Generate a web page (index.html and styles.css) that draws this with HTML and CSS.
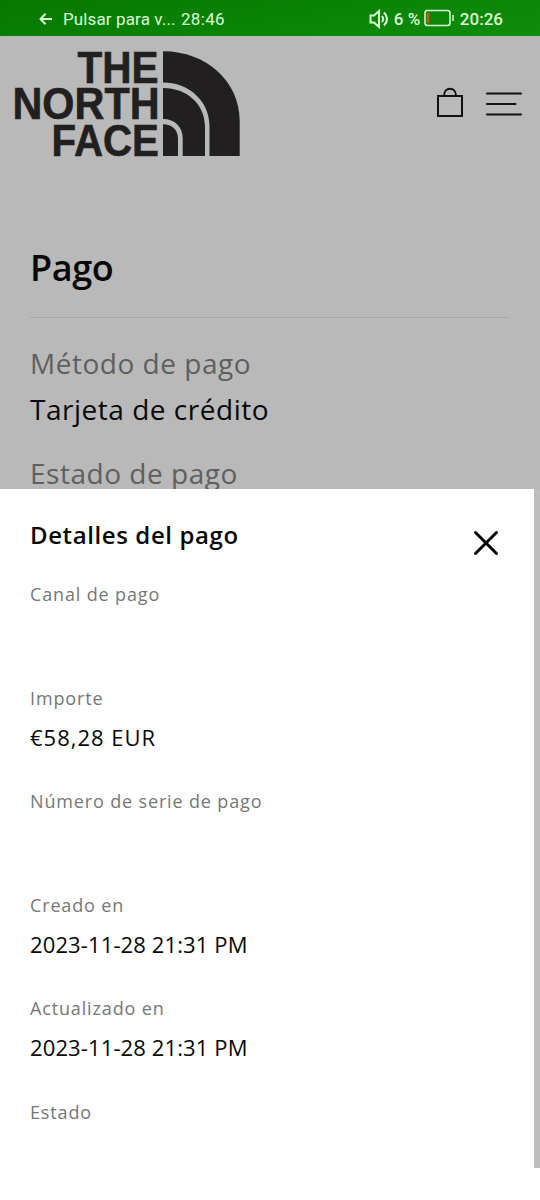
FILE: index.html
```html
<!DOCTYPE html>
<html lang="es">
<head>
<meta charset="utf-8">
<title>Detalles del pago</title>
<link rel="stylesheet" href="styles.css">
</head>
<body>
<div class="status">
  <div class="call">
    <svg class="back" width="14" height="14" viewBox="0 0 14 14"><path d="M13 7H2M6.500 1.800 1.500 7l5 5.200"/></svg>
    <span class="call-text">Pulsar para v...</span><span class="call-time">28:46</span>
  </div>
  <div class="system">
    <svg class="sound" width="20" height="20" viewBox="0 0 20 20"><path d="M1.500 6.500H5L10 2v16L5 13.500H1.500zM13 7q2.300 3 0 6M15 3.500q6 6.500 0 13"/></svg>
    <span class="percent">6 %</span>
    <svg class="battery" width="31" height="18" viewBox="0 0 31 18"><rect x="1" y="1.500" width="25" height="15" rx="2.500"/><path d="M29 6v6"/><path class="charge" d="M4 4v10"/></svg>
    <span class="clock">20:26</span>
  </div>
</div>
<header class="header">
  <svg class="logo" width="240" height="121" viewBox="0 36 240 121">
    <g class="brand">
      <text x="77.500" y="82.500" textLength="81" lengthAdjust="spacingAndGlyphs">THE</text>
      <text x="12.500" y="118.800" textLength="147" lengthAdjust="spacingAndGlyphs">NORTH</text>
      <text x="51.500" y="155.600" textLength="107.500" lengthAdjust="spacingAndGlyphs">FACE</text>
    </g>
    <path d="M163 51.300C207 51.300 239.700 82 239.700 121V156H209.500V126C209.500 101 189 82.500 163 82.500Z"/>
    <path d="M163 88C187 88 205 104 205 127V156H182.700V138C182.700 127 175 119 163 119Z"/>
    <path d="M163 124.300C172 124.300 178 130 178 139V156H163Z"/>
  </svg>
  <div class="actions">
    <svg class="line-icon bag" width="28" height="32" viewBox="0 0 28 32"><path d="M2 10h24v20H2zM8 10C8 .3 20 .3 20 10"/></svg>
    <svg class="line-icon round" width="36" height="26" viewBox="0 0 36 26"><path d="M1 2.500h34M1 13h28.500M1 23.500h34"/></svg>
  </div>
</header>
<main class="page">
  <h1 class="title">Pago</h1>
  <div class="info label">Método de pago</div>
  <div class="info">Tarjeta de crédito</div>
  <div class="info label last">Estado de pago</div>
</main>
<section class="sheet">
  <div class="sheet-head">
    <h2 class="sheet-title">Detalles del pago</h2>
    <svg class="close" width="26" height="26" viewBox="0 0 26 26"><path d="M2.500 2.500l21 21M23.500 2.500l-21 21"/></svg>
  </div>
  <dl class="fields">
    <div class="field"><dt>Canal de pago</dt><dd></dd></div>
    <div class="field"><dt>Importe</dt><dd class="amount">€58,28 EUR</dd></div>
    <div class="field"><dt>Número de serie de pago</dt><dd></dd></div>
    <div class="field"><dt>Creado en</dt><dd>2023-11-28 21:31 PM</dd></div>
    <div class="field"><dt>Actualizado en</dt><dd>2023-11-28 21:31 PM</dd></div>
    <div class="field"><dt>Estado</dt><dd></dd></div>
  </dl>
</section>
</body>
</html>
```
FILE: styles.css
```css
* { box-sizing: border-box; }
body { margin: 0; width: 540px; height: 1200px; overflow: hidden; background: #fff; color: #080808; font-family: "Open Sans", "Noto Sans", sans-serif; }
h1, h2, dl, dd { margin: 0; }
svg { display: block; flex: none; }
.status { height: 36px; display: flex; justify-content: space-between; align-items: center; padding: 1px 37px 0 39px; background: linear-gradient(170deg, #087700, #0a8505 60%, #118b0b); color: #d9ffd2; font: 17px/24px Roboto, sans-serif; white-space: nowrap; }
.status svg { fill: none; stroke: #d9ffd2; stroke-width: 2; }
.call, .system { display: flex; align-items: center; }
.call-text { margin-left: 10px; width: 118px; letter-spacing: .12px; }
.call-time { letter-spacing: .3px; }
.system { font-weight: 500; }
.percent { margin-left: 5px; width: 30px; }
.status .battery { stroke-width: 1.5; margin-top: -1px; }
.status .charge { stroke: #c65b13; stroke-width: 2.500; }
.clock { margin-left: 5px; }
.header { height: 121px; display: flex; justify-content: space-between; background: #b9b9b9; }
.logo { fill: #211f20; }
.brand { font: bold 45px "Liberation Sans", sans-serif; stroke: #211f20; stroke-width: .6; }
.actions { display: flex; align-items: center; gap: 22px; padding: 15px 18px 0 0; }
.line-icon { fill: none; stroke: #111; stroke-width: 2; }
.bag { margin-top: -4px; }
.round { stroke-linecap: round; }
.page { height: 332px; padding: 81px 30px 0; background: #b9b9b9; overflow: hidden; }
.title { height: 80px; border-bottom: 1px solid #a8a8a8; font-size: 36px; line-height: 60px; font-weight: 600; letter-spacing: -.4px; }
.info { height: 46px; line-height: 45px; font-size: 28px; letter-spacing: .52px; white-space: nowrap; }
.title + .info { margin-top: 23px; }
.label { color: #5f5f5f; }
.last { margin-top: 18px; }
.sheet { width: 534px; height: 679px; padding: 26px 30px 0; background: #fff; box-shadow: 6px 0 #bebebe; }
.sheet-head { height: 60px; display: flex; justify-content: space-between; }
.sheet-title { font-size: 24px; line-height: 40px; font-weight: 600; letter-spacing: .6px; }
.close { margin: 15px 5px 0 0; fill: none; stroke: #000; stroke-width: 3; stroke-linecap: round; }
.field { height: 103.500px; }
dt { height: 40px; line-height: 38px; font-size: 18px; color: #777; letter-spacing: .85px; }
dd { height: 40px; line-height: 37px; font-size: 22px; letter-spacing: .12px; }
.amount { letter-spacing: 1px; }
```
